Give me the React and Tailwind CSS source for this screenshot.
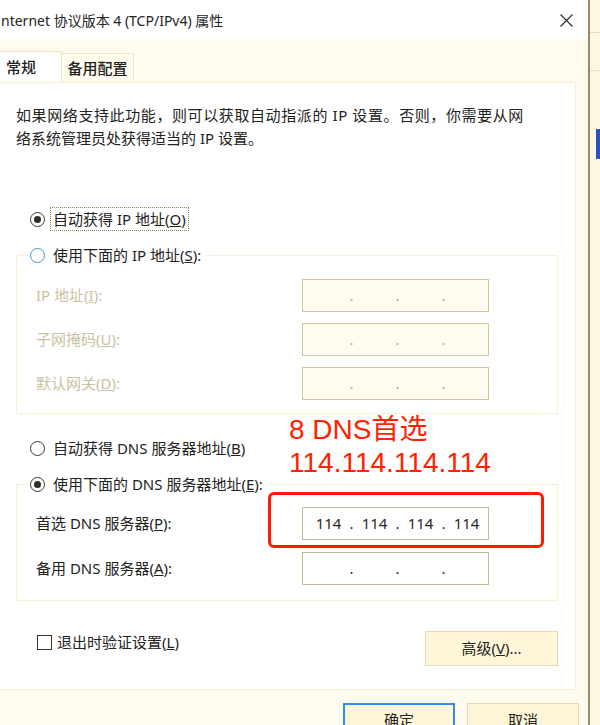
import React from 'react';

const FONT = { fontFamily: '"Noto Sans", "Noto Sans CJK SC", sans-serif' };

function Radio({ checked, blue, focus, children }) {
  return (
    <div className="flex h-[24px] items-center bg-white pr-[2px]">
      <div
        className={`flex h-[15px] w-[15px] items-center justify-center rounded-full border ${
          blue ? 'border-[#3d9bd6]' : 'border-[#3a3a30]'
        }`}
      >
        {checked && <div className="h-[7px] w-[7px] rounded-full bg-[#2e2e28]" />}
      </div>
      <span
        className={`ml-[5px] px-[2px] leading-[22px] ${
          focus ? 'border border-dotted border-[#8a8060]' : 'border border-transparent'
        }`}
      >
        {children}
      </span>
    </div>
  );
}

function IpInput({ parts, disabled }) {
  const segs = parts || ['', '', '', ''];
  return (
    <div
      className={`flex h-[33px] w-[187px] items-center border pl-[5px] ${
        disabled ? 'border-[#d3c7a0] bg-[#fffcef]' : 'border-[#c4b994] bg-white'
      }`}
    >
      {segs.map((s, i) => (
        <React.Fragment key={i}>
          {i > 0 && (
            <span className={`w-[5px] text-center ${disabled ? 'text-[#b8ad88]' : 'text-[#2a2a22]'}`}>.</span>
          )}
          <span className="w-[41px] text-center text-[#2a2a22]">{s}</span>
        </React.Fragment>
      ))}
    </div>
  );
}

function Row({ label, disabled, parts }) {
  return (
    <div className="flex h-[33px] items-center">
      <span className={`w-[266px] ${disabled ? 'text-[#cbc2a2]' : ''}`}>{label}</span>
      <IpInput parts={parts} disabled={disabled} />
    </div>
  );
}

export default function App() {
  return (
    <div className="flex h-[725px] w-[600px] overflow-hidden bg-[#fcf6e2] text-[15px] text-[#23231c]" style={FONT}>
      <div className="flex h-full w-[590px] shrink-0 flex-col border-r-2 border-[#978a6a] bg-[#fffbee]">
        {/* title bar */}
        <div className="flex h-[40px] shrink-0 items-center justify-between bg-white pl-[1px] pr-[15px]">
          <span className="text-[14px] text-[#24241e]">nternet 协议版本 4 (TCP/IPv4) 属性</span>
          <svg width="13" height="13" viewBox="0 0 13 13">
            <path d="M0.5 0.5 L12.5 12.5 M12.5 0.5 L0.5 12.5" stroke="#2d2b22" strokeWidth="1.1" />
          </svg>
        </div>

        {/* tabs */}
        <div className="flex h-[42px] shrink-0 items-end">
          <div className="relative -mb-px flex h-[32px] w-[62px] items-center border-r border-t border-[#f1e6bd] bg-white pl-[6px] pb-[1px] font-medium">
            常规
          </div>
          <div className="flex h-[29px] w-[72px] items-center justify-center border-r border-t border-[#f1e6bd] font-medium">
            备用配置
          </div>
        </div>

        {/* panel */}
        <div className="relative h-[608px] w-[576px] shrink-0 border-b border-r border-t border-[#f8eecb] bg-white">
          <div className="pl-[16px] pt-[21px] leading-[23px]">
            <div className="tracking-[0.6px]">如果网络支持此功能，则可以获取自动指派的 IP 设置。否则，你需要从网</div>
            <div>络系统管理员处获得适当的 IP 设置。</div>
          </div>

          <div className="ml-[30px] mt-[57px] flex">
            <Radio checked focus>自动获得 IP 地址(<u>O</u>)</Radio>
          </div>

          <fieldset className="ml-[16px] mt-[12px] w-[542px] border border-[#f8efcd] pb-[13px] pl-[19px] pt-[12px]">
            <legend className="-ml-[6px]">
              <Radio blue>使用下面的 IP 地址(<u>S</u>):</Radio>
            </legend>
            <div className="flex flex-col gap-[11px]">
              <Row label={<>IP 地址(<u>I</u>):</>} disabled />
              <Row label={<>子网掩码(<u>U</u>):</>} disabled />
              <Row label={<>默认网关(<u>D</u>):</>} disabled />
            </div>
          </fieldset>

          <div className="ml-[30px] mt-[22px] flex">
            <Radio>自动获得 DNS 服务器地址(<u>B</u>)</Radio>
          </div>

          <fieldset className="ml-[16px] mt-[12px] w-[542px] border border-[#f8efcd] pb-[15px] pl-[19px] pt-[11px]">
            <legend className="-ml-[6px]">
              <Radio checked>使用下面的 DNS 服务器地址(<u>E</u>):</Radio>
            </legend>
            <div className="flex flex-col gap-[12px]">
              <Row label={<>首选 DNS 服务器(<u>P</u>):</>} parts={['114', '114', '114', '114']} />
              <Row label={<>备用 DNS 服务器(<u>A</u>):</>} />
            </div>
          </fieldset>

          <div className="mt-[30px] flex items-start justify-between pr-[17px]">
            <div className="ml-[37px] -mt-[1px] flex h-[24px] items-center">
              <div className="h-[15px] w-[15px] border border-[#38362c] bg-white" />
              <span className="ml-[5px]">退出时验证设置(<u>L</u>)</span>
            </div>
            <button className="flex h-[35px] w-[133px] items-center justify-center border border-[#e7dbb6] bg-[#fff6d9]">
              高级(<u>V</u>)...
            </button>
          </div>

          {/* red annotation */}
          <div
            className="absolute left-[289px] top-[330px] text-[28px] leading-[33px] text-[#ff2200]"
            style={{ fontFamily: '"Liberation Sans", "Noto Sans CJK SC", sans-serif' }}
          >
            <div>8 DNS首选</div>
            <div>114.114.114.114</div>
          </div>
          <div className="absolute left-[268px] top-[409px] h-[56px] w-[276px] rounded-[6px] border-[3px] border-[#ff1a00]" />
        </div>

        {/* dialog buttons */}
        <div className="mt-[13px] flex shrink-0 justify-end gap-[12px] pr-[9px]">
          <button className="flex h-[35px] w-[112px] items-center justify-center border-2 border-[#2b8fef] bg-[#fff6d9]">
            确定
          </button>
          <button className="flex h-[35px] w-[112px] items-center justify-center border border-[#e4d8b2] bg-[#fff6d9]">
            取消
          </button>
        </div>
      </div>

      {/* neighbouring window strip */}
      <div className="flex flex-1 flex-col">
        <div className="h-[33px] border-b border-[#e7dcbf]" />
        <div className="h-[38px] border-b border-[#e7dcbf]" />
        <div className="h-[58px]" />
        <div className="ml-[6px] h-[30px] bg-[#2e4fc0]" />
      </div>
    </div>
  );
}
